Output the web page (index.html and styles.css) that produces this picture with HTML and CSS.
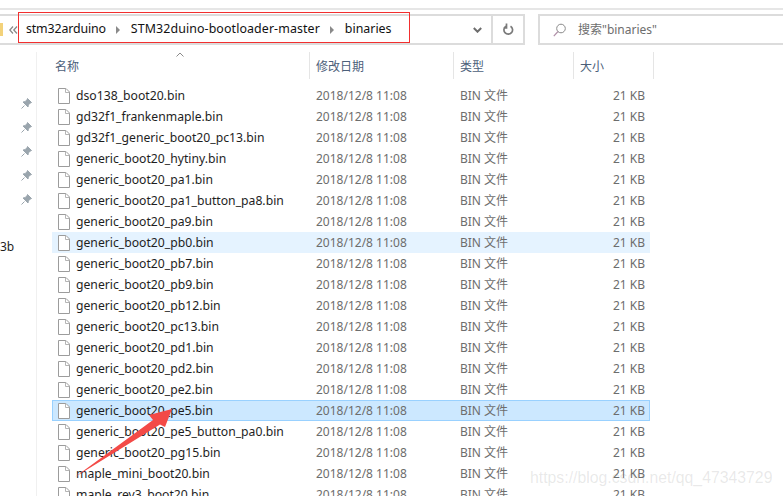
FILE: index.html
```html
<!DOCTYPE html>
<html lang="zh">
<head>
    <meta charset="UTF-8">
    <meta name="viewport" content="width=device-width, initial-scale=1.0">
    <title>binaries</title>
    <link rel="stylesheet" href="styles.css">
</head>
<body>
    <svg width="0" height="0" class="defs">
        <symbol id="file" viewBox="0 0 12 16">
            <path d="M.5.5h7.500l3.500 3.500v11.500H.5z" fill="#fff" stroke="#9c9c9c"/>
            <path d="M7.500.5v4h4" fill="none" stroke="#b5b5b5"/>
        </symbol>
        <symbol id="pin" viewBox="0 0 11 11">
            <path d="M6.500.5l4 4-1.200.5-2 2L7 9 2 4l2-.3 2-2zM3.500 7.500L.5 10.500" fill="#9aa5ad" stroke="#9aa5ad"/>
        </symbol>
    </svg>
    <div class="window">
        <div class="toolbar">
            <div class="address">
                <span class="folder"></span>
                <svg class="back" width="9" height="8" viewBox="0 0 9 8"><path d="M4 .5L.8 4 4 7.500M8 .5L4.800 4 8 7.500" fill="none" stroke="#8a8a8a" stroke-width="1.300"/></svg>
                <span class="crumb crumb-short">stm32arduino</span>
                <svg class="sep" width="6" height="8" viewBox="0 0 6 8"><path d="M1 0l4 4-4 4z" fill="#8a8a8a"/></svg>
                <span class="crumb crumb-long">STM32duino-bootloader-master</span>
                <svg class="sep" width="6" height="8" viewBox="0 0 6 8"><path d="M1 0l4 4-4 4z" fill="#8a8a8a"/></svg>
                <span class="crumb">binaries</span>
                <svg class="chevron" width="9" height="6" viewBox="0 0 9 6"><path d="M.8 1l3.700 3.700L8.200 1" fill="none" stroke="#6d6d6d" stroke-width="2"/></svg>
                <div class="refresh">
                    <svg width="11" height="13" viewBox="0 0 11 13"><path d="M7.500 3.200a4.300 4.300 0 1 1-4.500 0M3.500 .5v4.500h-3" fill="none" stroke="#7a7a7a" stroke-width="1.700"/></svg>
                </div>
            </div>
            <div class="search">
                <svg width="13" height="14" viewBox="0 0 13 14"><circle cx="8" cy="5.500" r="4.300" fill="none" stroke="#8a8a8a"/><path d="M5 8.500L.8 13.200" stroke="#b08fa8" stroke-width="1.200"/></svg>
                <span>搜索"binaries"</span>
            </div>
        </div>
        <div class="content">
            <div class="sidebar">
                <svg class="pin"><use href="#pin"/></svg>
                <svg class="pin"><use href="#pin"/></svg>
                <svg class="pin"><use href="#pin"/></svg>
                <svg class="pin"><use href="#pin"/></svg>
                <svg class="pin"><use href="#pin"/></svg>
                <span class="side-label">3b</span>
            </div>
            <div class="list">
                <div class="head">
                    <div class="col-name">名称<svg class="sort" width="8" height="5" viewBox="0 0 8 5"><path d="M.5 4.500L4 1l3.500 3.500" fill="none" stroke="#8a8a8a"/></svg></div>
                    <div class="col-date">修改日期</div>
                    <div class="col-type">类型</div>
                    <div class="col-size">大小</div>
                </div>
                <div class="row"><svg class="file"><use href="#file"/></svg><span class="name">dso138_boot20.bin</span><span class="date">2018/12/8 11:08</span><span class="type">BIN 文件</span><span class="size">21 KB</span></div>
                <div class="row"><svg class="file"><use href="#file"/></svg><span class="name">gd32f1_frankenmaple.bin</span><span class="date">2018/12/8 11:08</span><span class="type">BIN 文件</span><span class="size">21 KB</span></div>
                <div class="row"><svg class="file"><use href="#file"/></svg><span class="name">gd32f1_generic_boot20_pc13.bin</span><span class="date">2018/12/8 11:08</span><span class="type">BIN 文件</span><span class="size">21 KB</span></div>
                <div class="row"><svg class="file"><use href="#file"/></svg><span class="name">generic_boot20_hytiny.bin</span><span class="date">2018/12/8 11:08</span><span class="type">BIN 文件</span><span class="size">21 KB</span></div>
                <div class="row"><svg class="file"><use href="#file"/></svg><span class="name">generic_boot20_pa1.bin</span><span class="date">2018/12/8 11:08</span><span class="type">BIN 文件</span><span class="size">21 KB</span></div>
                <div class="row"><svg class="file"><use href="#file"/></svg><span class="name">generic_boot20_pa1_button_pa8.bin</span><span class="date">2018/12/8 11:08</span><span class="type">BIN 文件</span><span class="size">21 KB</span></div>
                <div class="row"><svg class="file"><use href="#file"/></svg><span class="name">generic_boot20_pa9.bin</span><span class="date">2018/12/8 11:08</span><span class="type">BIN 文件</span><span class="size">21 KB</span></div>
                <div class="row hover"><svg class="file"><use href="#file"/></svg><span class="name">generic_boot20_pb0.bin</span><span class="date">2018/12/8 11:08</span><span class="type">BIN 文件</span><span class="size">21 KB</span></div>
                <div class="row"><svg class="file"><use href="#file"/></svg><span class="name">generic_boot20_pb7.bin</span><span class="date">2018/12/8 11:08</span><span class="type">BIN 文件</span><span class="size">21 KB</span></div>
                <div class="row"><svg class="file"><use href="#file"/></svg><span class="name">generic_boot20_pb9.bin</span><span class="date">2018/12/8 11:08</span><span class="type">BIN 文件</span><span class="size">21 KB</span></div>
                <div class="row"><svg class="file"><use href="#file"/></svg><span class="name">generic_boot20_pb12.bin</span><span class="date">2018/12/8 11:08</span><span class="type">BIN 文件</span><span class="size">21 KB</span></div>
                <div class="row"><svg class="file"><use href="#file"/></svg><span class="name">generic_boot20_pc13.bin</span><span class="date">2018/12/8 11:08</span><span class="type">BIN 文件</span><span class="size">21 KB</span></div>
                <div class="row"><svg class="file"><use href="#file"/></svg><span class="name">generic_boot20_pd1.bin</span><span class="date">2018/12/8 11:08</span><span class="type">BIN 文件</span><span class="size">21 KB</span></div>
                <div class="row"><svg class="file"><use href="#file"/></svg><span class="name">generic_boot20_pd2.bin</span><span class="date">2018/12/8 11:08</span><span class="type">BIN 文件</span><span class="size">21 KB</span></div>
                <div class="row"><svg class="file"><use href="#file"/></svg><span class="name">generic_boot20_pe2.bin</span><span class="date">2018/12/8 11:08</span><span class="type">BIN 文件</span><span class="size">21 KB</span></div>
                <div class="row selected"><svg class="file"><use href="#file"/></svg><span class="name">generic_boot20_pe5.bin</span><span class="date">2018/12/8 11:08</span><span class="type">BIN 文件</span><span class="size">21 KB</span></div>
                <div class="row"><svg class="file"><use href="#file"/></svg><span class="name">generic_boot20_pe5_button_pa0.bin</span><span class="date">2018/12/8 11:08</span><span class="type">BIN 文件</span><span class="size">21 KB</span></div>
                <div class="row"><svg class="file"><use href="#file"/></svg><span class="name">generic_boot20_pg15.bin</span><span class="date">2018/12/8 11:08</span><span class="type">BIN 文件</span><span class="size">21 KB</span></div>
                <div class="row"><svg class="file"><use href="#file"/></svg><span class="name">maple_mini_boot20.bin</span><span class="date">2018/12/8 11:08</span><span class="type">BIN 文件</span><span class="size">21 KB</span></div>
                <div class="row"><svg class="file"><use href="#file"/></svg><span class="name">maple_rev3_boot20.bin</span><span class="date">2018/12/8 11:08</span><span class="type">BIN 文件</span><span class="size">21 KB</span></div>
            </div>
        </div>
        <div class="red-box"></div>
        <svg class="arrow" width="100" height="75" viewBox="0 0 100 75"><path d="M0 71L78 14 74 9 97 3 90 21 85 18.500z" fill="#f34a47"/></svg>
        <div class="watermark">https://blog.csdn.net/qq_47343729</div>
    </div>
</body>
</html>
```

FILE: styles.css
```css
html, body {
    margin: 0;
    background: #fff;
}
.defs {
    position: absolute;
}
.window {
    position: relative;
    width: 783px;
    height: 496px;
    overflow: hidden;
    font-family: "Noto Sans", "Noto Sans CJK SC", sans-serif;
    font-size: 12px;
    color: #1e1e1e;
}
.toolbar {
    display: flex;
    gap: 13px;
    margin-top: 8px;
    padding-top: 4px;
    height: 33px;
    border-top: 2px solid #e6e6e6;
}
.address {
    display: flex;
    align-items: center;
    width: 525px;
    height: 31px;
    box-sizing: border-box;
    border: 2px solid #dcdcdc;
    border-left: none;
}
.folder {
    width: 3px;
    height: 13px;
    background: #f3d27a;
    margin-right: 6px;
}
.back {
    margin-right: 8px;
}
.crumb {
    font-size: 12.400px;
    color: #111;
    margin-bottom: 2px;
}
.crumb-short {
    letter-spacing: -0.150px;
}
.crumb-long {
    letter-spacing: 0.100px;
}
.sep {
    margin: 0 9.500px;
}
.chevron {
    margin-left: auto;
    margin-right: 9px;
}
.refresh {
    display: flex;
    align-items: center;
    justify-content: center;
    width: 30px;
    height: 100%;
    border-left: 2px solid #dcdcdc;
}
.search {
    display: flex;
    align-items: center;
    flex: 1;
    gap: 12px;
    height: 31px;
    box-sizing: border-box;
    padding-left: 13px;
    border: 2px solid #dcdcdc;
    border-right: none;
    color: #6d6d6d;
}
.search span {
    margin-bottom: 2px;
}
.content {
    display: flex;
    margin-top: 5px;
}
.sidebar {
    display: flex;
    flex-direction: column;
    align-items: flex-end;
    width: 37px;
    padding: 46px 4px 0 0;
    box-sizing: border-box;
    border-right: 1px solid #f0f0f0;
    height: 450px;
    margin-right: 15px;
}
.pin {
    width: 11px;
    height: 11px;
    margin: 0 0 13px;
}
.side-label {
    align-self: flex-start;
    margin-top: 20px;
}
.list {
    width: 602px;
}
.head {
    display: flex;
    height: 27px;
    margin-bottom: 6px;
    color: #4c607a;
}
.head > div {
    display: flex;
    align-items: center;
    box-sizing: border-box;
    padding-left: 6px;
    border-right: 1px solid #e5e5e5;
}
.col-name {
    position: relative;
    width: 258px;
    padding-left: 3px !important;
}
.sort {
    position: absolute;
    left: 124px;
    top: 0;
}
.col-date {
    width: 144px;
}
.col-type {
    width: 120px;
}
.col-size {
    width: 80px;
}
.row {
    display: flex;
    align-items: center;
    height: 21px;
    line-height: 16px;
    margin-right: 4px;
    color: #6d6d6d;
}
.row.hover {
    background: #e5f3ff;
}
.row.selected {
    background: #cce8ff;
    box-shadow: inset 0 0 0 1px #99d1ff;
}
.file {
    width: 12px;
    height: 16px;
    margin-left: 6px;
    flex: none;
}
.name {
    width: 240px;
    margin-left: 6px;
    font-size: 12.200px;
    color: #1e1e1e;
}
.date {
    width: 144px;
}
.type {
    width: 100px;
}
.size {
    width: 85px;
    text-align: right;
}
.red-box {
    position: absolute;
    left: 18px;
    top: 12px;
    width: 392px;
    height: 31px;
    box-sizing: border-box;
    border: 1px solid #f22f2f;
}
.arrow {
    position: absolute;
    left: 75px;
    top: 406px;
}
.watermark {
    position: absolute;
    left: 530px;
    top: 469px;
    font-family: "Liberation Sans", sans-serif;
    font-size: 15.800px;
    color: rgba(120, 120, 120, 0.17);
}
```
